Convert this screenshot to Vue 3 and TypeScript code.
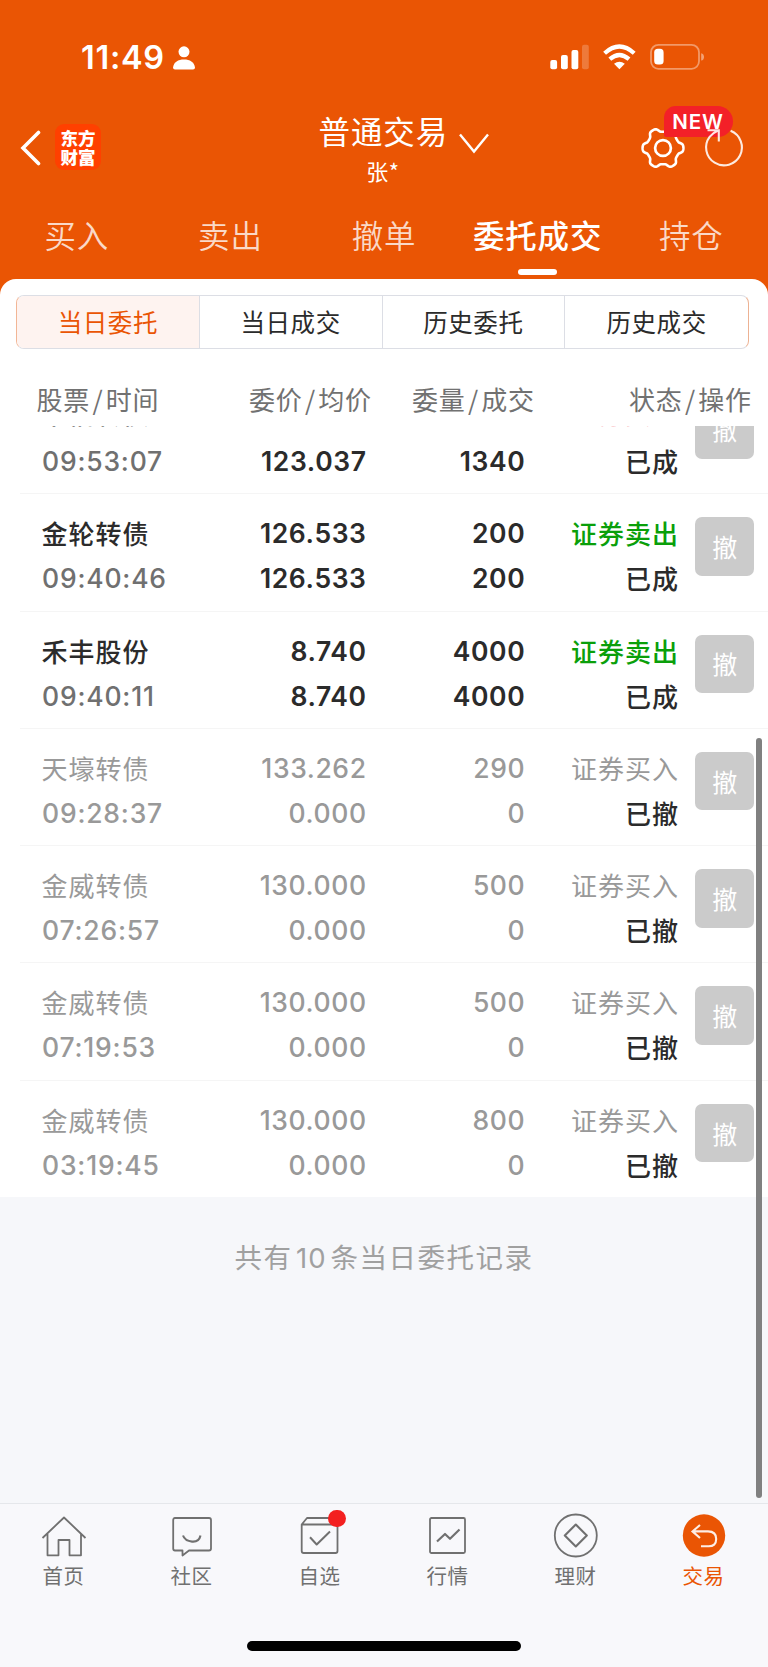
<script setup lang="ts">
interface Order {
  name: string
  time: string
  price: string
  avg: string
  qty: string
  filled: string
  side: string
  tone: 'buy' | 'sell' | 'void'
  status: string
}

const tabs: string[] = ['买入', '卖出', '撤单', '委托成交', '持仓']
const segments: string[] = ['当日委托', '当日成交', '历史委托', '历史成交']
const columns: string[][] = [['股票', '时间'], ['委价', '均价'], ['委量', '成交'], ['状态', '操作']]

// The first order is scrolled halfway under the column header, so its price line is out of view.
const orders: Order[] = [
  { name: '卡倍转债', time: '09:53:07', price: '', avg: '123.037', qty: '', filled: '1340', side: '证券买入', tone: 'buy', status: '已成' },
  { name: '金轮转债', time: '09:40:46', price: '126.533', avg: '126.533', qty: '200', filled: '200', side: '证券卖出', tone: 'sell', status: '已成' },
  { name: '禾丰股份', time: '09:40:11', price: '8.740', avg: '8.740', qty: '4000', filled: '4000', side: '证券卖出', tone: 'sell', status: '已成' },
  { name: '天壕转债', time: '09:28:37', price: '133.262', avg: '0.000', qty: '290', filled: '0', side: '证券买入', tone: 'void', status: '已撤' },
  { name: '金威转债', time: '07:26:57', price: '130.000', avg: '0.000', qty: '500', filled: '0', side: '证券买入', tone: 'void', status: '已撤' },
  { name: '金威转债', time: '07:19:53', price: '130.000', avg: '0.000', qty: '500', filled: '0', side: '证券买入', tone: 'void', status: '已撤' },
  { name: '金威转债', time: '03:19:45', price: '130.000', avg: '0.000', qty: '800', filled: '0', side: '证券买入', tone: 'void', status: '已撤' },
]

const nav: string[] = ['首页', '社区', '自选', '行情', '理财', '交易']

// Six-toothed gear outline traced in polar coordinates.
const gearPath: string = (() => {
  const pts: string[] = []
  for (let i = 0; i < 144; i++) {
    const a = (i / 144) * Math.PI * 2
    const r = 18.3 + (2.1 * Math.tanh(1.8 * Math.cos(6 * a))) / Math.tanh(1.8)
    pts.push(`${(24 + r * Math.cos(a)).toFixed(2)} ${(24 + r * Math.sin(a)).toFixed(2)}`)
  }
  return `M${pts.join('L')}Z`
})()
</script>

<template>
  <div class="screen">
    <header class="top">
      <div class="status">
        <span class="clock">11:49</span>
        <svg class="person" width="22" height="24" viewBox="0 0 22 24">
          <circle cx="11" cy="5.8" r="5.5" fill="#fff" />
          <path d="M0 21.5C1 16 5 13.6 11 13.6S21 16 22 21.5Q22 23.5 20 23.5H2Q0 23.5 0 21.5Z" fill="#fff" />
        </svg>
        <svg class="radio" width="156" height="28" viewBox="549 43 156 28">
          <g fill="#fff">
            <rect x="550.3" y="60" width="6.8" height="9.3" rx="2" />
            <rect x="561" y="55" width="6.8" height="14.3" rx="2" />
            <rect x="571.5" y="50" width="6.8" height="19.3" rx="2" />
            <rect x="582" y="44.8" width="6.8" height="24.5" rx="2" opacity=".22" />
            <path d="M619.4 69.3L614 63.8Q619.4 59.8 624.8 63.8Z" />
          </g>
          <g fill="none" stroke="#fff" stroke-width="4.2">
            <path d="M604.6 53.2Q619.4 39.8 634.2 53.2" />
            <path d="M609.8 59.2Q619.4 50.8 629 59.2" />
          </g>
          <rect x="651" y="44.8" width="48" height="24" rx="7.5" fill="none" stroke="#fff" stroke-opacity=".4" stroke-width="1.8" />
          <path d="M701.2 53.2Q704 54 704 57T701.2 60.6Z" fill="#fff" opacity=".45" />
          <rect x="654.2" y="48.8" width="9.4" height="15.8" rx="3.6" fill="#fff" />
        </svg>
      </div>

      <div class="titlebar">
        <svg class="back" width="22" height="36" viewBox="0 0 22 36">
          <path d="M18.5 2.5L3 18L18.5 33.5" fill="none" stroke="#fff" stroke-width="3.6" stroke-linecap="round" />
        </svg>
        <div class="logo"><span>东方</span><span>财富</span></div>
        <div class="title">
          <div class="name">普通交易</div>
          <div class="owner">张*</div>
        </div>
        <svg class="chevron" width="32" height="22" viewBox="0 0 32 22">
          <path d="M2 1.5L16 18.5L30 1.5" fill="none" stroke="#fff" stroke-width="2.4" />
        </svg>
        <div class="tools">
          <svg class="gear" width="48" height="48" viewBox="0 0 48 48">
            <path :d="gearPath" fill="none" stroke="#fff" stroke-width="2.6" stroke-linejoin="round" />
            <circle cx="24" cy="24" r="7.9" fill="none" stroke="#fff" stroke-width="2.7" />
          </svg>
          <span class="new">NEW</span>
          <svg class="refresh" width="42" height="44" viewBox="704 125 42 44">
            <path d="M731.6 130.8A17.9 17.9 0 1 1 710.6 136.8Q714 132.6 719.6 130.2M708.5 130.3H719.8V141.5" fill="none" stroke="#fff" stroke-opacity=".88" stroke-width="2.1" />
          </svg>
        </div>
      </div>

      <nav class="tabs">
        <div v-for="(t, i) in tabs" :key="t" class="tab" :class="{ on: i === 3 }">{{ t }}</div>
      </nav>
    </header>

    <main class="sheet">
      <div class="segments">
        <div v-for="(s, i) in segments" :key="s" class="segment" :class="{ on: i === 0 }">{{ s }}</div>
      </div>
      <div class="columns">
        <div v-for="c in columns" :key="c[0]" class="column">{{ c[0] }}<i>/</i>{{ c[1] }}</div>
      </div>
      <div class="list">
        <div v-for="(o, i) in orders" :key="i" class="order" :class="o.tone">
          <div class="cell first"><b>{{ o.name }}</b><span class="num time">{{ o.time }}</span></div>
          <div class="cell num"><span>{{ o.price }}</span><span>{{ o.avg }}</span></div>
          <div class="cell num"><span>{{ o.qty }}</span><span>{{ o.filled }}</span></div>
          <div class="cell"><b class="side">{{ o.side }}</b><b class="state">{{ o.status }}</b></div>
          <button class="cancel">撤</button>
        </div>
      </div>
    </main>

    <section class="rest">共有<span>10</span>条当日委托记录</section>

    <footer class="bottom">
      <div class="nav">
        <div v-for="(n, i) in nav" :key="n" class="item" :class="{ on: i === 5 }">
          <svg width="52" height="48" viewBox="0 0 52 48" fill="none" stroke="#707070" stroke-width="1.8" stroke-linejoin="round">
            <path v-if="i === 0" d="M4.5 28L26 7.5L47.5 28M9.5 24V45.3H20.5V30H31.5V45.3H43V24" />
            <g v-else-if="i === 1">
              <path d="M9 8H43Q45 8 45 10V38.5Q45 40.5 43 40.5H23L16.5 45.5V40.5H9Q7.2 40.5 7.2 38.5V10Q7.2 8 9 8Z" />
              <path d="M17 25.5Q19 31 26 31.6T34.5 25.5" stroke-width="2.1" />
            </g>
            <g v-else-if="i === 2">
              <path d="M7.7 14.5L13 8H40Q43.5 8 43.5 12V41Q43.5 43 41.5 43H9.7Q7.7 43 7.7 41ZM7.7 14.5H43.5" />
              <path d="M16 27.3L22.7 34.5L36 21.5" stroke-width="2" />
            </g>
            <g v-else-if="i === 3">
              <rect x="8" y="8" width="35" height="35" rx="1.5" />
              <path d="M15 31.5L23 24L28 28.8L37.5 19.5" stroke-width="2.2" />
            </g>
            <g v-else-if="i === 4">
              <circle cx="25.8" cy="25.5" r="21" />
              <path d="M25.8 14.5L36.8 25.5L25.8 36.5L14.8 25.5Z" stroke-width="2.1" />
            </g>
            <g v-else>
              <circle cx="26" cy="25.5" r="21.2" fill="#ea5504" stroke="none" />
              <path d="M22 15L14.5 21.4L22 28M14.5 21.4H30Q38.2 21.4 38.2 29T30 36.2H23" stroke="#fff" stroke-opacity=".9" stroke-width="2.1" stroke-linejoin="miter" />
            </g>
          </svg>
          <span class="label">{{ n }}</span>
          <i v-if="i === 2" class="dot"></i>
        </div>
      </div>
      <div class="home"></div>
    </footer>
    <div class="scroll"></div>
  </div>
</template>

<style>
body {
  margin: 0;
}
</style>

<style scoped>
.screen {
  position: relative;
  width: 768px;
  height: 1667px;
  overflow: hidden;
  display: flex;
  flex-direction: column;
  background: #f6f7fa;
  font-family: 'Noto Sans CJK SC', sans-serif;
  color: #2b2b2b;
}
.top {
  height: 279px;
  flex: none;
  background: #ea5504;
  color: #fff;
  display: flex;
  flex-direction: column;
}
.status {
  height: 70px;
  margin-top: 22px;
  display: flex;
  align-items: center;
  padding-left: 81px;
}
.clock {
  font: 600 32.5px/40px Inter, sans-serif;
  width: 92px;
  letter-spacing: 0.7px;
  padding-top: 2px;
  white-space: nowrap;
}
.person {
  margin-top: 1px;
}
.radio {
  margin-left: 354px;
}
.titlebar {
  height: 100px;
  display: flex;
  align-items: flex-start;
}
.back {
  margin: 38px 0 0 20px;
}
.logo {
  width: 46px;
  height: 46px;
  margin: 32px 0 0 13px;
  border-radius: 9px;
  background: #ff4000;
  display: flex;
  flex-direction: column;
  align-items: center;
  justify-content: center;
}
.logo span {
  font-size: 17.5px;
  line-height: 19px;
  font-weight: 900;
  position: relative;
  top: -0.5px;
}
.title {
  width: 129px;
  margin: 17.5px 0 0 217.5px;
  text-align: center;
}
.name {
  font-size: 31.5px;
  line-height: 40px;
  letter-spacing: 0.9px;
  white-space: nowrap;
}
.owner {
  font-size: 22px;
  line-height: 30px;
  margin-top: 5px;
  letter-spacing: 0.6px;
}
.chevron {
  margin: 41px 0 0 10px;
}
.tools {
  position: relative;
  display: flex;
  margin: 31.5px 0 0 149px;
}
.new {
  position: absolute;
  left: 25px;
  top: -18px;
  width: 69px;
  height: 31.5px;
  border-radius: 12px 16px 16px 2px;
  background: #f32028;
  font: 600 20.5px/31px Inter, sans-serif;
  letter-spacing: 0.8px;
  text-align: center;
}
.refresh {
  position: relative;
  margin: 1.5px 0 0 16.5px;
}
.tabs {
  display: grid;
  grid-template-columns: repeat(5, 1fr);
  height: 87px;
}
.tab {
  position: relative;
  text-align: center;
  font-size: 31.5px;
  line-height: 84px;
  letter-spacing: 0.8px;
  font-weight: 350;
  color: rgba(255, 255, 255, 0.78);
}
.tab.on {
  font-weight: 500;
  color: #fff;
}
.tab.on::after {
  content: '';
  position: absolute;
  left: 57px;
  bottom: 4px;
  width: 39px;
  height: 6px;
  border-radius: 3px;
  background: #fff;
}
.sheet {
  height: 918px;
  flex: none;
  background: #fff;
  border-radius: 16px 16px 0 0;
  box-shadow: 0 -20px 0 20px #ea5504;
  clip-path: inset(-1px 0 0 0);
}
.segments {
  display: grid;
  grid-template-columns: repeat(4, 1fr);
  width: 731px;
  height: 52px;
  margin: 0 0 0.5px 16px;
  position: relative;
  top: 16px;
  border: 1.5px solid #dcdee5;
  border-left-color: #f2b696;
  border-right-color: #edb293;
  border-radius: 8px;
  overflow: hidden;
}
.segment {
  text-align: center;
  font-size: 24.5px;
  line-height: 52px;
  letter-spacing: 0.6px;
  border-right: 1.5px solid #dcdee5;
}
.segment:last-child {
  border-right: 0;
}
.segment.on {
  color: #ea5504;
  background: #fef3f0;
}
.columns {
  height: 52.5px;
  margin-top: 40px;
  padding-right: 16px;
  display: grid;
  grid-template-columns: 159.5px 212.5px 163px 217px;
  text-align: right;
  color: #717171;
  font-size: 26px;
  line-height: 51px;
  letter-spacing: 0.9px;
  white-space: nowrap;
}
.columns i {
  font-style: normal;
  margin: 0 2.2px;
}
.list {
  height: 769.5px;
  overflow: hidden;
}
.order {
  box-sizing: border-box;
  height: 117.3px;
  margin-left: 20px;
  padding: 17px 0 0 22px;
  border-bottom: 1.5px solid #f5f5f5;
  display: grid;
  grid-template-columns: 140px 184px 158.7px 153.3px 76px;
}
.order:first-child {
  margin-top: -48.5px;
}
.cell {
  display: flex;
  flex-direction: column;
  text-align: right;
  font-size: 26px;
  line-height: 45px;
  letter-spacing: 1px;
  white-space: nowrap;
}
.cell > * {
  height: 45px;
}
.cell b {
  font-weight: 500;
  margin-right: -1px;
  line-height: 43px;
}
.buy .first b,
.buy .cell .side {
  line-height: 38px;
}
.cell > span {
  margin-right: -0.6px;
}
.first {
  text-align: left;
}
.first b {
  margin-left: -0.5px;
}
.num {
  font-family: Inter, sans-serif;
  font-size: 26.5px;
  font-weight: 600;
  letter-spacing: 0.6px;
}
.time {
  color: #707070;
  font-weight: 500;
  letter-spacing: 0.8px;
}
.buy .side {
  color: #f58a8e;
}
.sell .side {
  color: #0a9f0a;
}
.void .cell {
  color: #999;
}
.void .num {
  font-weight: 550;
}
.void .time {
  color: #999;
}
.void .cell b {
  font-weight: 400;
}
.void .cell .state {
  color: #2b2b2b;
  font-weight: 500;
}
.cancel {
  width: 58.5px;
  height: 58.5px;
  margin: 6px 0 0 17.5px;
  padding: 0;
  border: 0;
  border-radius: 7px;
  background: #cbcbcb;
  color: #fff;
  font: 400 25px/57px 'Noto Sans CJK SC', sans-serif;
}
.rest {
  height: 306px;
  flex: none;
  text-align: center;
  color: #a0a0a0;
  font-size: 27.5px;
  line-height: 119px;
  letter-spacing: 1.5px;
}
.rest span {
  margin: 0 4px 0 3.5px;
  font-family: Inter, sans-serif;
  letter-spacing: 1px;
}
.bottom {
  flex: 1;
  border-top: 1.5px solid #e5e7eb;
  background: #f8f8fb;
}
.nav {
  display: grid;
  grid-template-columns: repeat(6, 128px);
}
.item {
  position: relative;
  display: flex;
  flex-direction: column;
  align-items: center;
  padding-top: 5.5px;
  color: #707070;
}
.item.on {
  color: #ea5504;
}
.label {
  font-size: 20.5px;
  line-height: 28px;
  letter-spacing: 0.6px;
  margin-top: 3.5px;
  margin-right: 1px;
}
.dot {
  position: absolute;
  left: 72px;
  top: 5.5px;
  width: 17.5px;
  height: 17.5px;
  border-radius: 50%;
  background: #f32020;
}
.home {
  width: 274px;
  height: 10px;
  margin: 52px 0 0 247px;
  border-radius: 5px;
  background: #000;
}
.scroll {
  position: absolute;
  left: 756px;
  top: 738px;
  width: 6px;
  height: 760px;
  border-radius: 3px;
  background: #808080;
}
</style>
